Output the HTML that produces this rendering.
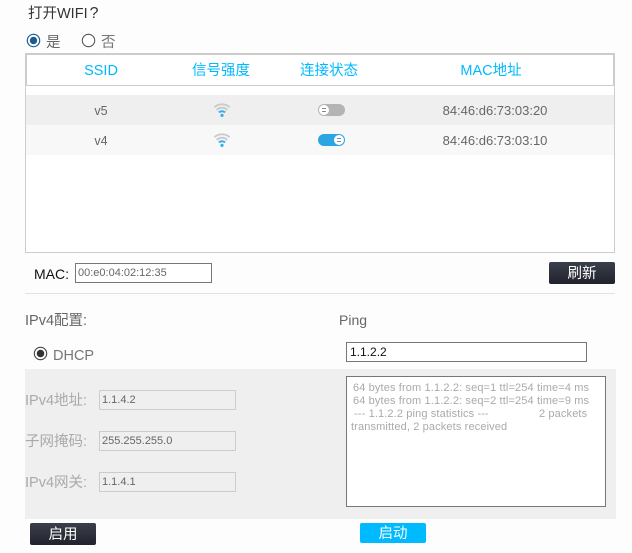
<!DOCTYPE html>
<html lang="zh">
<head>
<meta charset="utf-8">
<title>WIFI</title>
<style>
html,body{margin:0;padding:0;width:632px;height:553px;overflow:hidden;background:#fdfdfd;font-family:"Liberation Sans","WenQuanYi Zen Hei","Noto Sans CJK SC",sans-serif}
.a{position:absolute;white-space:nowrap;box-sizing:border-box}
.h{color:#00baff;font-size:14.5px;top:62px;line-height:18px;transform:translateX(-50%)}
.t{color:#666;font-size:13px;line-height:16px;transform:translateX(-50%)}
.in{border:1px solid #777;background:#fff;font-size:11px;line-height:18px;padding-left:2px}
.g{border:1px solid #ccc;background:#efefef;color:#666;font-size:11px;line-height:18px;padding-left:2px;left:99px;width:137px;height:20px}
.l{color:#aaa;font-size:14.5px;line-height:18px;left:25px}
.b{color:#fff;font-size:14.5px;text-align:center;border-radius:2px;width:66px;height:22px;line-height:24px;background:linear-gradient(#3b3f4b,#20232c)}
.tg{width:27px;height:12px;border-radius:6px}
.k{position:absolute;top:1px;width:10px;height:10px;border-radius:50%;background:#fff}
.k:before,.k:after{content:"";position:absolute;left:3px;width:4px;height:1px;background:#888}
.k:before{top:3px}.k:after{top:6px}
.p{font-size:11px;line-height:13px;color:#aaa;letter-spacing:.13px}
</style>
</head>
<body>
<div class="a" style="left:28px;top:5px;font-size:14.5px;line-height:18px;color:#333">打开WIFI<span style="margin-left:2px;font-size:16px">?</span></div>

<svg class="a" style="left:26px;top:33px" width="16" height="16"><circle cx="7.5" cy="7.5" r="6.2" fill="#fff" stroke="#1f5c8e" stroke-width="1.2"/><circle cx="7.5" cy="7.5" r="3.7" fill="#1f5c8e"/></svg>
<div class="a" style="left:46px;top:34px;font-size:14.5px;line-height:18px;color:#666">是</div>
<svg class="a" style="left:81px;top:33px" width="16" height="16"><circle cx="7.5" cy="7.5" r="6.2" fill="#fff" stroke="#555" stroke-width="1.1"/></svg>
<div class="a" style="left:101px;top:34px;font-size:14.5px;line-height:18px;color:#777">否</div>

<!-- table -->
<div class="a" style="left:25px;top:53px;width:590px;height:200px;border:1px solid #ccc;border-top:0;background:#fff"></div>
<div class="a" style="left:25px;top:53px;width:590px;height:33px;border:2px solid #ccc;border-bottom-width:1px;background:#fff"></div>
<div class="a h" style="left:101px">SSID</div>
<div class="a h" style="left:221px">信号强度</div>
<div class="a h" style="left:329px">连接状态</div>
<div class="a h" style="left:491px">MAC地址</div>

<div class="a" style="left:26px;top:95px;width:588px;height:30px;background:#efefef"></div>
<div class="a" style="left:26px;top:125px;width:588px;height:30px;background:#f8f8f8"></div>

<div class="a t" style="left:101px;top:103px;font-size:12.5px">v5</div>
<div class="a t" style="left:101px;top:133px;font-size:12.5px">v4</div>
<div class="a t" style="left:495px;top:103px">84:46:d6:73:03:20</div>
<div class="a t" style="left:495px;top:133px">84:46:d6:73:03:10</div>

<svg class="a" style="left:213px;top:102px" width="18" height="17" viewBox="0 0 18 17" fill="none"><path d="M1.4 5.2C5.6 1.4 12.4 1.4 16.6 5.2" stroke="#cbcbcb" stroke-width="1.9"/><path d="M3.6 8C6.7 5 11.3 5 14.4 8" stroke="#cbcbcb" stroke-width="1.9"/><path d="M5.9 10.4C7.7 8.9 10.3 8.9 12.1 10.4" stroke="#35aef0" stroke-width="2"/><circle cx="9" cy="13.4" r="1.6" fill="#35aef0"/></svg>
<svg class="a" style="left:213px;top:132px" width="18" height="17" viewBox="0 0 18 17" fill="none"><path d="M1.4 5.2C5.6 1.4 12.4 1.4 16.6 5.2" stroke="#cbcbcb" stroke-width="1.9"/><path d="M3.6 8C6.7 5 11.3 5 14.4 8" stroke="#cbcbcb" stroke-width="1.9"/><path d="M5.9 10.4C7.7 8.9 10.3 8.9 12.1 10.4" stroke="#35aef0" stroke-width="2"/><circle cx="9" cy="13.4" r="1.6" fill="#35aef0"/></svg>

<div class="a tg" style="left:318px;top:104px;background:#b4b4b4"><div class="k" style="left:1px"></div></div>
<div class="a tg" style="left:318px;top:134px;background:#2ca6e2"><div class="k" style="left:16px"></div></div>

<!-- MAC row -->
<div class="a" style="left:34px;top:265px;font-size:14px;line-height:18px;color:#111">MAC:</div>
<div class="a in" style="left:75px;top:263px;width:137px;height:20px;color:#666">00:e0:04:02:12:35</div>
<div class="a b" style="left:549px;top:262px">刷新</div>
<div class="a" style="left:25px;top:293px;width:590px;height:1px;background:#e2e2e2"></div>

<div class="a" style="left:25px;top:312px;font-size:14.5px;line-height:18px;color:#666">IPv4配置:</div>
<div class="a" style="left:339px;top:311px;font-size:14px;line-height:18px;color:#666">Ping</div>

<svg class="a" style="left:33px;top:346px" width="16" height="16"><circle cx="7.5" cy="7.5" r="6.2" fill="#fff" stroke="#444" stroke-width="1.1"/><circle cx="7.5" cy="7.5" r="3.8" fill="#333"/></svg>
<div class="a" style="left:53px;top:347px;font-size:14.5px;line-height:18px;color:#777">DHCP</div>
<div class="a in" style="left:346px;top:342px;width:241px;height:20px;color:#111;font-size:12px;padding-left:3px">1.1.2.2</div>

<!-- gray band -->
<div class="a" style="left:25px;top:369px;width:591px;height:150px;background:#efefef"></div>
<div class="a l" style="top:392px">IPv4地址:</div>
<div class="a l" style="top:433px">子网掩码:</div>
<div class="a l" style="top:474px">IPv4网关:</div>
<div class="a g" style="top:390px">1.1.4.2</div>
<div class="a g" style="top:431px">255.255.255.0</div>
<div class="a g" style="top:472px">1.1.4.1</div>

<div class="a" style="left:346px;top:376px;width:260px;height:131px;border:1px solid #777;background:#fff"></div>
<div class="a p" style="left:353px;top:382px">64 bytes from 1.1.2.2: seq=1 ttl=254 time=4 ms</div>
<div class="a p" style="left:353px;top:395px">64 bytes from 1.1.2.2: seq=2 ttl=254 time=9 ms</div>
<div class="a p" style="left:354px;top:408px">--- 1.1.2.2 ping statistics ---</div>
<div class="a p" style="left:539px;top:408px">2 packets</div>
<div class="a p" style="left:351px;top:421px">transmitted, 2 packets received</div>

<div class="a b" style="left:30px;top:523px">启用</div>
<div class="a b" style="left:360px;top:523px;height:20px;line-height:22px;background:#00baff">启动</div>
</body>
</html>
